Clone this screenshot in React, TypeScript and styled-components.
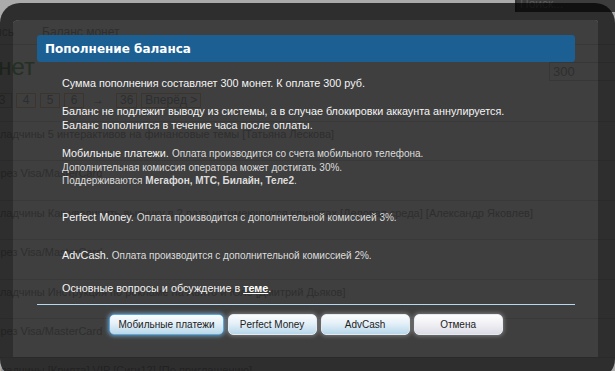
import React from 'react';
import styled, { createGlobalStyle } from 'styled-components';

const GlobalStyle = createGlobalStyle`
  html, body {
    margin: 0;
    padding: 0;
    background: #aeb0b0;
  }
  body {
    font-family: "Liberation Sans", Arial, sans-serif;
  }
`;

const Stage = styled.div`
  position: relative;
  width: 615px;
  height: 371px;
  overflow: hidden;
`;

// ---- the page under the dialog ----

const Page = styled.div`
  height: 100%;
  background: #fff;
  color: #bcbcbc;
  font-size: 12px;
  overflow: hidden;
`;

const TopBar = styled.div`
  height: 20px;
  display: flex;
  justify-content: flex-end;
`;

const SearchBox = styled.div`
  width: 95px;
  height: 12px;
  background: #5a5a5a;
  border-left: 2px solid #4c4c4c;
  color: #8a8a8a;
  font-size: 12px;
  line-height: 8px;
  padding-left: 3px;
  overflow: hidden;
`;

const Nav = styled.div`
  height: 24px;
  display: flex;
  align-items: center;
  gap: 28px;
  border-bottom: 1px solid #e4e4e4;
`;

const RightClip = styled.div<{ $w: number }>`
  width: ${p => p.$w}px;
  display: flex;
  justify-content: flex-end;
  overflow: hidden;
  white-space: nowrap;
`;

const HeadRow = styled.div`
  height: 44px;
  display: flex;
  align-items: center;
  justify-content: space-between;
`;

const Heading = styled(RightClip)`
  font-size: 24px;
  color: #98c498;
`;

const Amount = styled.div`
  width: 62px;
  height: 17px;
  margin-top: 9px;
  border: 1px solid #e0e0e0;
  border-right: 0;
  padding-left: 3px;
  font-size: 13px;
  line-height: 17px;
`;

const Pager = styled.div`
  height: 15px;
  display: flex;
  align-items: center;
  gap: 4px;
  margin: 4px 0 0 -8px;
`;

const PageBox = styled.span<{ $plain?: boolean }>`
  height: 13px;
  min-width: 12px;
  padding: 0 3px;
  border: 1px solid ${p => (p.$plain ? 'transparent' : '#eed8bd')};
  line-height: 13px;
  text-align: center;
  margin-right: ${p => (p.$plain ? '4px' : '0')};
`;

const List = styled.div`
  margin-top: 13px;
`;

const Row = styled.div`
  height: 39.4px;
  box-sizing: border-box;
  border-top: 1px solid #e6e6e6;
  padding-top: 4px;
  margin-left: -13px;
  white-space: nowrap;
  font-size: 11px;
  line-height: 16px;
`;

// ---- overlay ----

const Dim = styled.div`
  position: absolute;
  top: 0;
  left: 0;
  right: 0;
  bottom: 0;
  background: rgba(0, 0, 0, 0.33);
`;

const Frame = styled.div`
  position: absolute;
  top: 3px;
  left: 0;
  width: 615px;
  height: 376px;
  box-sizing: border-box;
  border-style: solid;
  border-color: rgba(0, 0, 0, 0.73);
  border-width: 17px 17px 22px 13px;
  border-radius: 20px;
  background: rgba(0, 0, 0, 0.63);
  background-clip: padding-box;
  padding: 15px 23px 0 24px;
`;

const Dialog = styled.div`
  display: flex;
  flex-direction: column;
`;

const TitleBar = styled.div`
  height: 27px;
  display: flex;
  align-items: center;
  padding-left: 8px;
  border-radius: 3px;
  background: #1b5f93;
  color: #fff;
  font: bold 12px "DejaVu Sans", sans-serif;
`;

const Body = styled.div`
  padding: 14px 0 0 25px;
  color: #f4f4f4;
  font-size: 10.8px;
  line-height: 14px;
`;

const Para = styled.p<{ $gap: number; $lh?: number }>`
  margin: ${p => p.$gap}px 0 0;
  line-height: ${p => p.$lh ?? 14}px;
`;

const Small = styled.span`
  font-size: 10px;
  color: #dcdcdc;
`;

const Link = styled.a`
  color: #fff;
  font-weight: bold;
  text-decoration: underline;
`;

const Rule = styled.div`
  height: 1px;
  margin-top: 9px;
  background: #b3d8f0;
`;

const Buttons = styled.div`
  display: flex;
  justify-content: center;
  gap: 4px;
  margin-top: 9px;
`;

const Button = styled.button<{ $tone: 'blue' | 'gray'; $active?: boolean }>`
  height: 21px;
  min-width: 89px;
  padding: 0 8px;
  border-radius: 5px;
  border: 1px solid ${p => (p.$active ? '#5ca8db' : '#e4ecf2')};
  background: ${p =>
    p.$tone === 'blue'
      ? 'linear-gradient(#fbfdfe, #e4f0f8 45%, #b7d7eb)'
      : 'linear-gradient(#fdfdfe, #f1f1f5 45%, #dcdce6)'};
  box-shadow: ${p =>
    p.$active
      ? '0 0 4px 1px rgba(130, 190, 235, 0.7)'
      : '0 0 4px 1px rgba(200, 200, 200, 0.45)'};
  color: #222;
  font: 10px "Liberation Sans", Arial, sans-serif;
  cursor: pointer;
`;

const rows = [
  'Складчины 5 интерактивов на финансовые темы [Татьяна Лескова]',
  'Через Visa/MasterCard',
  'Складчины Как увеличить выручку в 2 раза на имеющихся клиентах [Деловая среда] [Александр Яковлев]',
  'Через Visa/MasterCard',
  'Складчины Инструкция по рекламе на Авито и Юле [Дмитрий Дьяков]',
  'Через Visa/MasterCard',
  'Складчины [Крипта] VIP [Сиги12] [По приглашению]',
];

export default function App() {
  return (
    <Stage>
      <GlobalStyle />
      <Page>
        <TopBar>
          <SearchBox>Поиск...</SearchBox>
        </TopBar>
        <Nav>
          <RightClip $w={14}>Запись</RightClip>
          <span>Баланс монет</span>
        </Nav>
        <HeadRow>
          <Heading $w={35}>Баланс монет</Heading>
          <Amount>300</Amount>
        </HeadRow>
        <Pager>
          <PageBox>3</PageBox>
          <PageBox>4</PageBox>
          <PageBox>5</PageBox>
          <PageBox>6</PageBox>
          <PageBox $plain>→</PageBox>
          <PageBox>36</PageBox>
          <PageBox>Вперёд &gt;</PageBox>
        </Pager>
        <List>
          {rows.map((r, i) => (
            <Row key={i}>{r}</Row>
          ))}
        </List>
      </Page>

      <Dim />

      <Frame>
        <Dialog>
          <TitleBar>Пополнение баланса</TitleBar>
          <Body>
            <Para $gap={0}>Сумма пополнения составляет 300 монет. К оплате 300 руб.</Para>
            <Para $gap={14}>
              Баланс не подлежит выводу из системы, а в случае блокировки аккаунта аннулируется.
              <br />
              Баланс пополнится в течение часа после оплаты.
            </Para>
            <Para $gap={15} $lh={13.5}>
              Мобильные платежи. <Small>Оплата производится со счета мобильного телефона.</Small>
              <br />
              <Small>Дополнительная комиссия оператора может достигать 30%.</Small>
              <br />
              <Small>
                Поддерживаются <b>Мегафон, МТС, Билайн, Теле2</b>.
              </Small>
            </Para>
            <Para $gap={22}>
              Perfect Money. <Small>Оплата производится с дополнительной комиссией 3%.</Small>
            </Para>
            <Para $gap={23}>
              AdvCash. <Small>Оплата производится с дополнительной комиссией 2%.</Small>
            </Para>
            <Para $gap={18}>
              Основные вопросы и обсуждение в <Link>теме</Link>.
            </Para>
          </Body>
          <Rule />
          <Buttons>
            <Button $tone="blue" $active>Мобильные платежи</Button>
            <Button $tone="blue">Perfect Money</Button>
            <Button $tone="blue">AdvCash</Button>
            <Button $tone="gray">Отмена</Button>
          </Buttons>
        </Dialog>
      </Frame>
    </Stage>
  );
}
